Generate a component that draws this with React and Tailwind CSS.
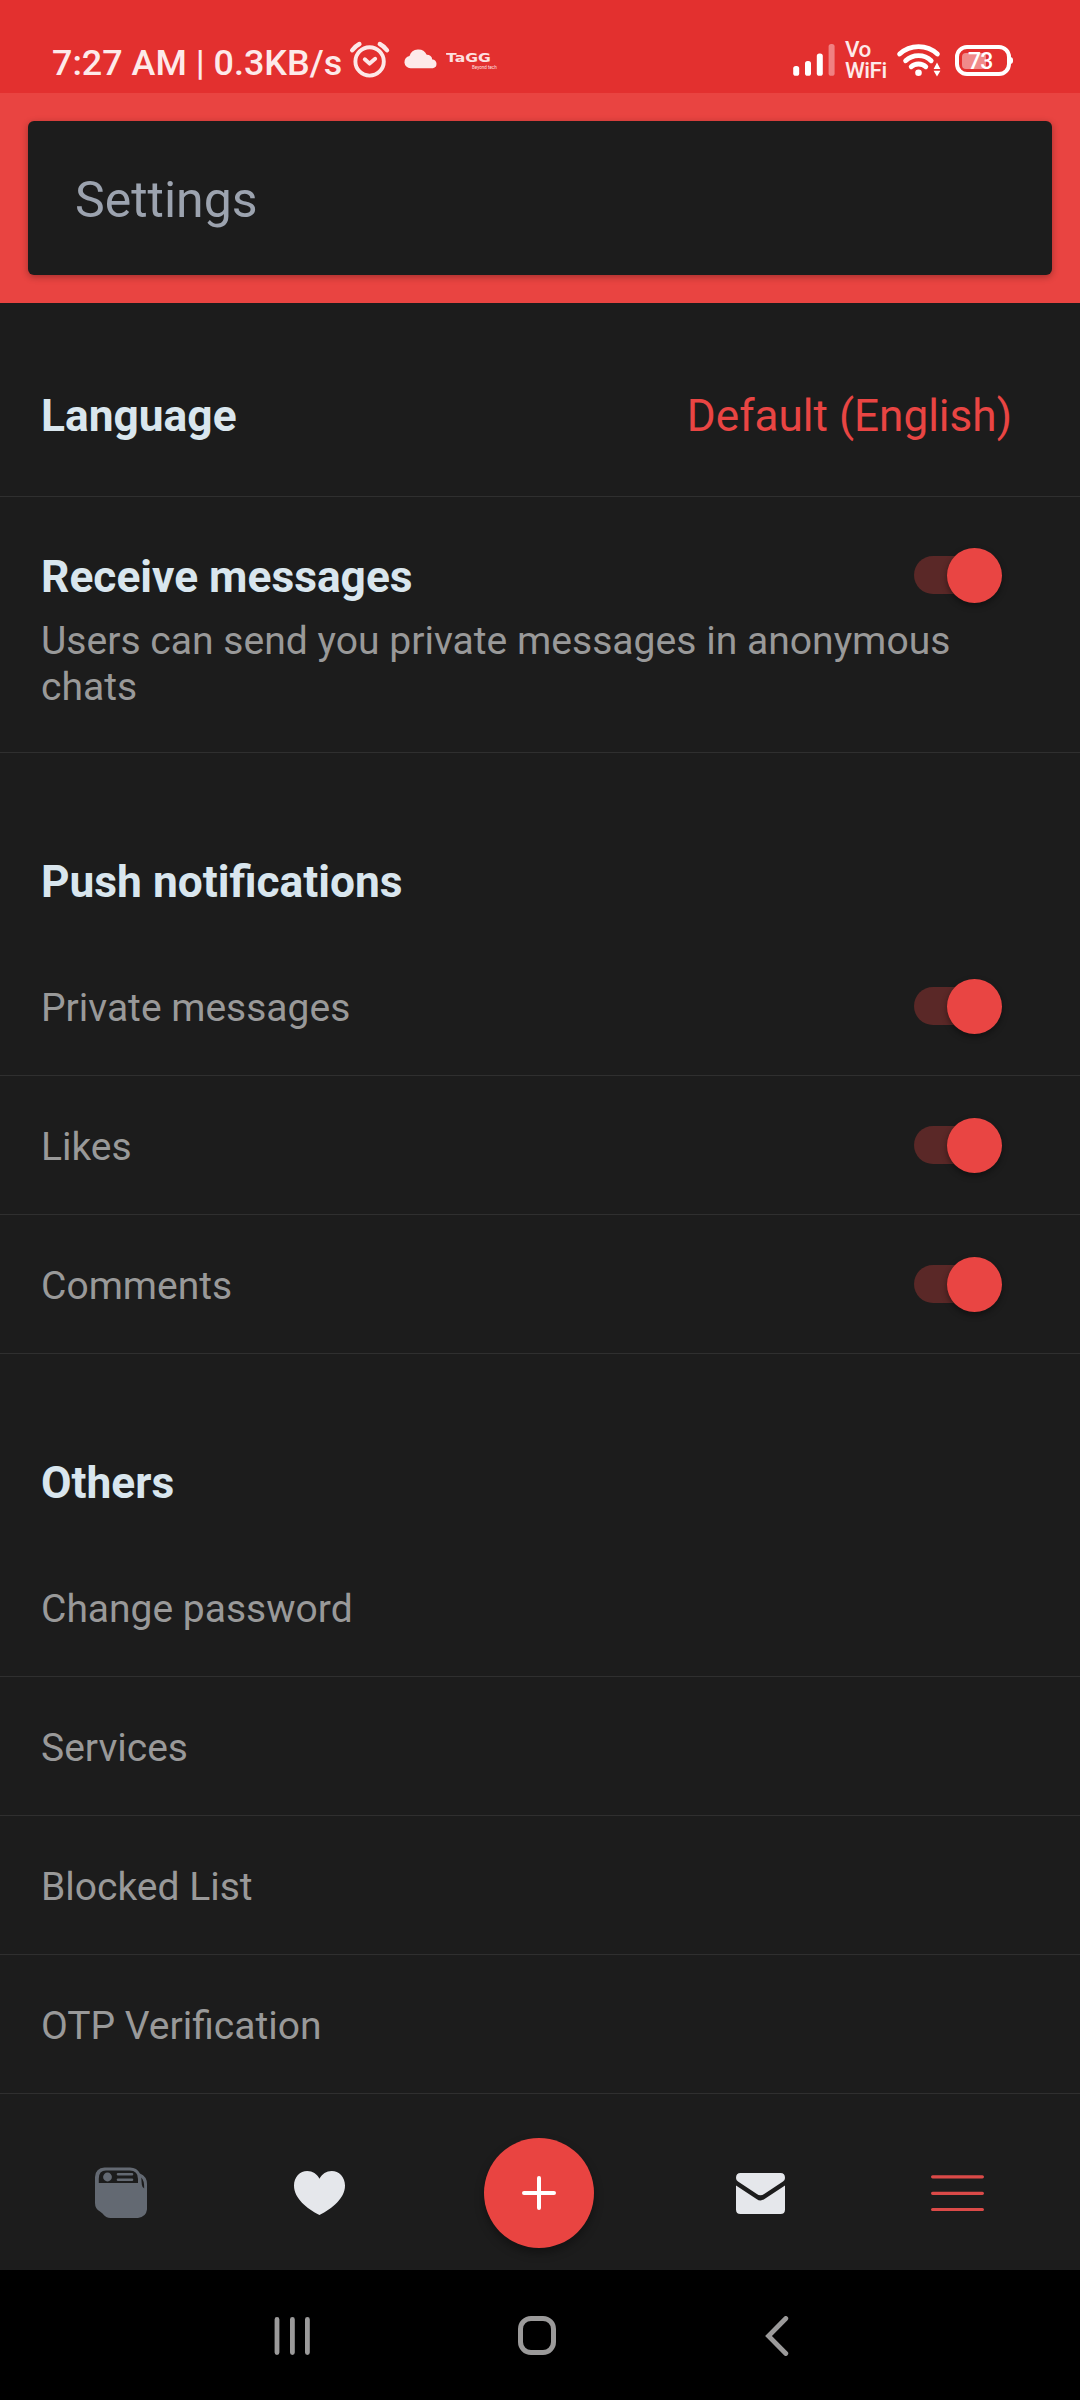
import React from "react";

function AlarmIcon() {
  return (
    <svg viewBox="348 0 44 93" className="h-[93px] w-[44px] shrink-0" fill="none" stroke="#fde8e8" strokeWidth="3.9" strokeLinecap="round" strokeLinejoin="round">
      <circle cx="369.6" cy="61.4" r="14.2" />
      <path d="M364.8 59.2 369.6 63.6 375.2 58.8" />
      <path d="M352.2 50.2Q355 46.4 359.4 44M379.8 44Q384.2 46.4 387 50.2" strokeWidth="4.4" />
    </svg>
  );
}

function CloudIcon() {
  return (
    <svg viewBox="402 0 38 93" className="ml-[10px] h-[93px] w-[38px] shrink-0" fill="#fdeaea">
      <path d="M410.5 68.3a6.2 6.2 0 0 1-1-12.3 9.3 9.3 0 0 1 17.2-1.2 5.6 5.6 0 0 1 5.6 4.6 4.5 4.5 0 0 1 .6 8.9z" />
    </svg>
  );
}

function SignalIcon() {
  return (
    <svg viewBox="791 0 46 93" className="h-[93px] w-[46px] shrink-0" fill="#fff">
      <rect x="793.2" y="66" width="6" height="9.8" rx="2.6" />
      <rect x="805" y="61" width="6" height="14.8" rx="2.6" />
      <rect x="816.8" y="53.4" width="6" height="22.4" rx="2.6" />
      <rect x="828.6" y="44" width="6" height="31.8" rx="2.6" fill="#f08182" />
    </svg>
  );
}

function WifiIcon() {
  return (
    <svg viewBox="896 0 46 93" className="h-[93px] w-[46px] shrink-0" fill="none" stroke="#fff" strokeWidth="4.8" strokeLinecap="round">
      <path d="M899.6 54Q907.6 46.6 918.6 46.6T937.4 54" />
      <path d="M905.6 60.8Q911 55.6 918.5 55.6T931.2 60.8" />
      <path d="M911.2 66.8Q914 64 918.5 64T925.8 66.8" />
      <circle cx="918.5" cy="72.8" r="3.3" fill="#fff" stroke="none" />
      <path d="M937 62.5l3.4 6.4h-6.8zM937 76.4l3.4-5.6h-6.8z" fill="#fff" stroke="none" />
    </svg>
  );
}

function Battery() {
  return (
    <div className="relative ml-[13px] mt-[45px] h-[31px] w-[56px] shrink-0 rounded-[12px] border-4 border-white">
      <div className="ml-[3px] mt-[3.5px] h-[16px] w-[24px] rounded-[4px] bg-[#f08a8a]" />
      <div className="absolute -right-[6px] top-[8px] h-[7px] w-[3px] rounded-r-full bg-white" />
      <span className="absolute top-0 left-[9px] text-[23px] font-medium leading-[25px] tracking-[-0.8px] text-white">73</span>
    </div>
  );
}

function StatusBar() {
  return (
    <div className="flex h-[93px] items-start bg-[#e3302f] pl-[52px]">
      <span className="mt-[43px] w-[296px] whitespace-nowrap text-[35.9px] font-medium leading-[40px] text-[#fdeaea]">
        7:27 AM | 0.3KB/s
      </span>
      <AlarmIcon />
      <CloudIcon />
      <div className="ml-[6px] mt-[51px] w-[50px] text-[#fde0e0]">
        <div className="origin-left scale-x-[1.3] whitespace-nowrap font-['DejaVu_Sans'] text-[12px] font-bold leading-[14px]">TaGG</div>
        <div className="ml-auto w-[24px] whitespace-nowrap text-[4.5px] leading-[5px]">Beyond tech</div>
      </div>
      <div className="ml-auto flex items-start pr-[69px]">
        <SignalIcon />
        <div className="ml-[8px] mt-[39px] w-[51px] text-[22.5px] font-medium leading-[21px] tracking-[-0.5px] text-[#fdeaea]">
          Vo
          <br />
          WiFi
        </div>
        <WifiIcon />
        <Battery />
      </div>
    </div>
  );
}

function Toggle() {
  return (
    <div className="relative h-[38px] w-[88px] shrink-0">
      <div className="h-[38px] w-[76px] rounded-full bg-[#5a2827]" />
      <div className="absolute -top-[8.5px] left-[32.5px] size-[55px] rounded-full bg-[#e94543] shadow-[0_3px_6px_rgba(0,0,0,0.4)]" />
    </div>
  );
}

function Row({ label, toggle }) {
  return (
    <div className="flex h-[139px] items-center justify-between border-b border-[#2f2f2f] pl-[41px] pr-[78px]">
      <span className="pt-[3px] text-[39px] leading-[46px] text-[#999]">{label}</span>
      {toggle && <Toggle />}
    </div>
  );
}

function Section({ title, rows, toggle }) {
  return (
    <section>
      <h2 className="h-[184px] pl-[41px] pt-[103px] text-[44.3px] font-bold leading-[52px] text-[#d9e6ee]">{title}</h2>
      {rows.map((label) => (
        <Row key={label} label={label} toggle={toggle} />
      ))}
    </section>
  );
}

function BottomNav() {
  return (
    <nav className="flex h-[176px] items-center pl-[95px] pt-[22px]">
      <svg viewBox="0 0 52 52" className="size-[52px]">
        <path d="M9.5 0.500H35Q42 0.500 45 6.500 52 9.500 52 17V42.500Q51 50 43 51H15.500Q11 51 7.500 46.500L5 44.500Q0 42 0 36V10Q0.500 1 9.500 0.500Z" fill="#636972" />
        <path d="M3.8 16V11.500Q3.800 3.500 11 3.500H34.500Q43 3.500 43 12V16Z" fill="#1c1c1c" />
        <circle cx="12.5" cy="10" r="4.400" fill="#636972" />
        <path d="M23 7.2H37M23 12.8H37" stroke="#636972" strokeWidth="2.6" strokeLinecap="round" />
        <path d="M46.2 10.500Q49.200 13 49.200 21.500 47.200 20.500 46.800 17.500Z" fill="#1c1c1c" />
      </svg>
      <svg viewBox="0 0 51 44" className="ml-[147px] h-[44px] w-[51px]" fill="#e5e7eb">
        <path d="M25.5 44C13 37.500 0 27.500 0 14.500 0 6 6 0 13.300 0 18.500 0 23 2.800 25.500 7.800 28 2.800 32.500 0 37.700 0 45 0 51 6 51 14.500 51 27.500 38 37.500 25.500 44Z" />
      </svg>
      <button className="ml-[139px] flex size-[110px] items-center justify-center rounded-full bg-[#e94441] shadow-[0_5px_10px_rgba(0,0,0,0.35)]">
        <svg viewBox="0 0 34 34" className="size-[34px]" stroke="#fff" strokeWidth="4" strokeLinecap="round">
          <path d="M17 2V32M2 17H32" />
        </svg>
      </button>
      <svg viewBox="0 0 49 41" className="ml-[142px] h-[41px] w-[49px]" fill="#e5e7eb">
        <path d="M4.5 0H44.500Q49 0 49 5 49 7 47 8.500L28.500 20.800Q24.500 23.800 20.500 20.800L2 8.500Q0 7 0 5 0 0 4.500 0Z" />
        <path d="M0 12.6 20.500 26Q24.500 29 28.500 26L49 12.600V36.500Q49 41 44.500 41H4.500Q0 41 0 36.500Z" />
      </svg>
      <svg viewBox="0 0 53 37" className="ml-[146px] h-[37px] w-[53px]" stroke="#db4a48" strokeWidth="3.2" strokeLinecap="round">
        <path d="M1.6 1.8H51.400M1.600 18.300H51.400M1.600 34.500H51.400" />
      </svg>
    </nav>
  );
}

function SystemNav() {
  return (
    <div className="flex h-[130px] items-center bg-black pl-[274px] pt-[1px]">
      <svg viewBox="0 0 36 38" className="h-[38px] w-[36px]" stroke="#9b9a9a" strokeWidth="4.8" strokeLinecap="round">
        <path d="M3 2.5V35.500M18.400 2.500V35.500M33.400 2.500V35.500" />
      </svg>
      <div className="ml-[207.5px] h-[39px] w-[38px] rounded-[13px] border-[5px] border-[#9b9a9a]" />
      <svg viewBox="0 0 26 40" className="ml-[208.5px] h-[40px] w-[26px]" fill="none" stroke="#9b9a9a" strokeWidth="4.8" strokeLinecap="round" strokeLinejoin="miter">
        <path d="M21.8 2.500 4.500 20 21.800 37.500" />
      </svg>
    </div>
  );
}

export default function App() {
  return (
    <div className="flex h-[2400px] w-[1080px] flex-col overflow-hidden bg-[#1c1c1c] font-[Roboto,sans-serif]">
      <StatusBar />
      <header className="h-[210px] bg-[#e94441] px-[28px] pt-[28px]">
        <div className="flex h-[154px] items-center rounded-[6px] bg-[#1c1c1c] pl-[47px] pt-[4px] shadow-[0_2px_7px_rgba(0,0,0,0.3)]">
          <h1 className="text-[50px] leading-[58px] text-[#9ca3af]">Settings</h1>
        </div>
      </header>
      <main>
        <div className="flex h-[194px] justify-between border-b border-[#2f2f2f] pl-[41px] pr-[68px] pt-[87px] leading-[52px]">
          <span className="text-[44.3px] font-bold text-[#d9e6ee]">Language</span>
          <span className="text-[44.1px] text-[#e94543]">Default (English)</span>
        </div>
        <div className="h-[256px] border-b border-[#2f2f2f] pl-[41px] pr-[78px] pt-[54px]">
          <div className="flex h-[52px] items-center justify-between">
            <h2 className="text-[44.3px] font-bold leading-[52px] text-[#d9e6ee]">Receive messages</h2>
            <div className="pb-[4px]">
              <Toggle />
            </div>
          </div>
          <p className="mt-[15px] text-[39.1px] leading-[46px] text-[#999]">
            Users can send you private messages in anonymous chats
          </p>
        </div>
        <Section title="Push notifications" rows={["Private messages", "Likes", "Comments"]} toggle />
        <Section title="Others" rows={["Change password", "Services", "Blocked List", "OTP Verification"]} />
      </main>
      <BottomNav />
      <SystemNav />
    </div>
  );
}
